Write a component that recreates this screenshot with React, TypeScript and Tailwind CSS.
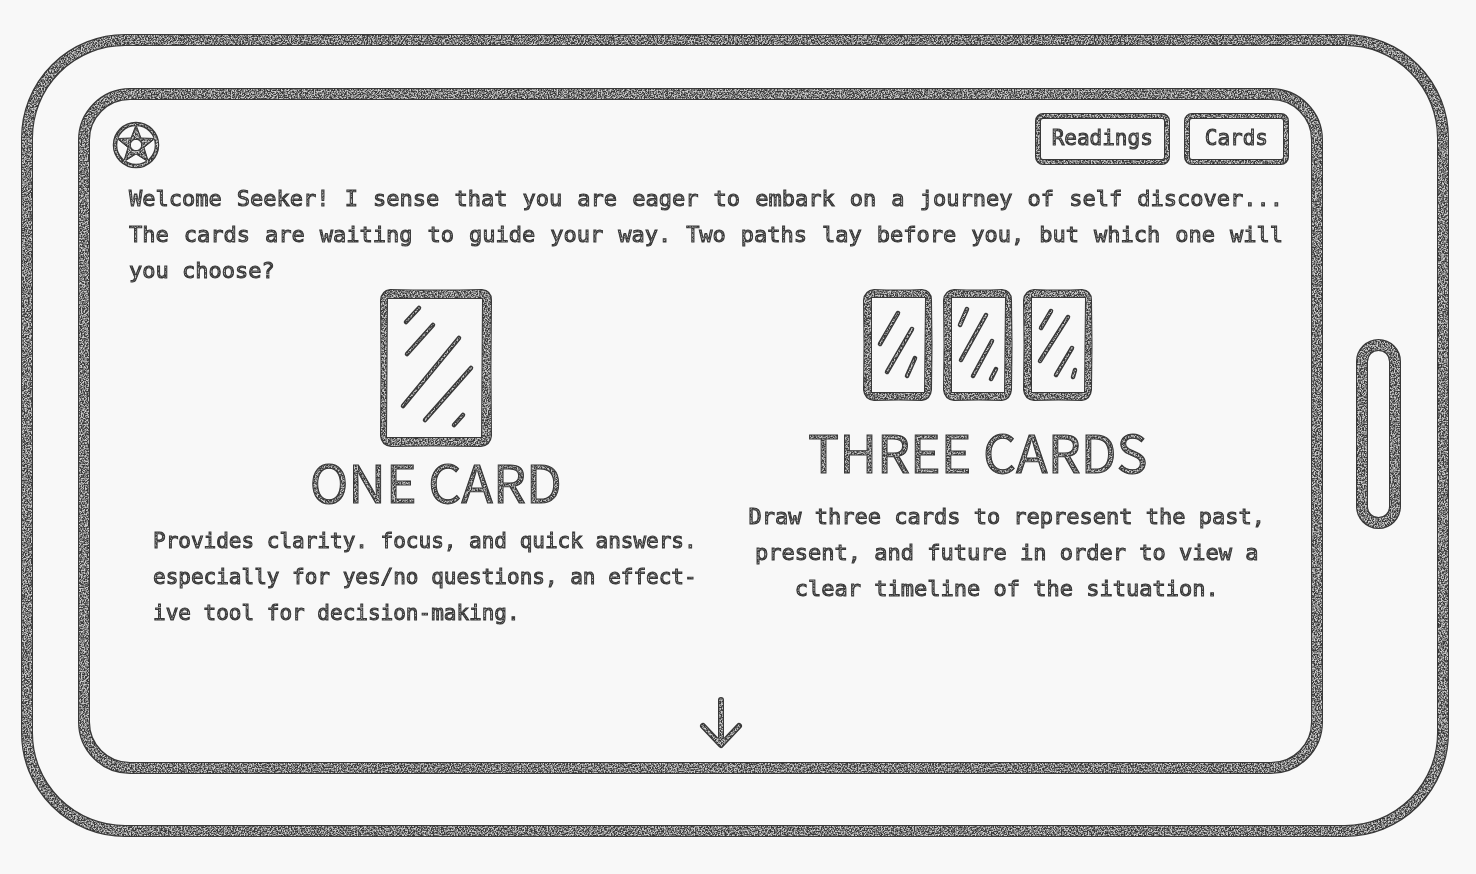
import React from "react";

function PencilFilter() {
  return (
    <svg width="0" height="0" className="absolute" aria-hidden="true">
      <filter id="pencil" x="0" y="0" width="100%" height="100%" colorInterpolationFilters="sRGB">
        <feMorphology in="SourceGraphic" operator="erode" radius="1" result="core" />
        <feTurbulence type="fractalNoise" baseFrequency="0.7" numOctaves="2" seed="9" result="noise" />
        <feColorMatrix
          in="noise"
          type="matrix"
          values="0 0 0 0 0.8  0 0 0 0 0.8  0 0 0 0 0.8  3.4 0 0 0 -1.25"
          result="specks"
        />
        <feComposite in="specks" in2="core" operator="in" result="grain" />
        <feMerge>
          <feMergeNode in="SourceGraphic" />
          <feMergeNode in="grain" />
        </feMerge>
      </filter>
    </svg>
  );
}

function Pentacle() {
  return (
    <svg viewBox="0 0 48 48" className="size-12" fill="none" stroke="currentColor" aria-hidden="true">
      <circle cx="24" cy="24" r="21" strokeWidth="4.5" />
      <path
        d="M24 4 L29 17 L43 17.5 L32 26.5 L36.5 41 L24 33 L11.5 41 L16 26.5 L5 17.5 L19 17 Z M24 18.4 a5.6 5.6 0 1 0 0.01 0 Z"
        fill="currentColor"
        fillRule="evenodd"
        strokeWidth="1"
        strokeLinejoin="round"
      />
    </svg>
  );
}

type CardProps = { strokes: string; large?: boolean };

function CardArt({ strokes, large = false }: CardProps) {
  return (
    <svg
      viewBox={large ? "0 0 112 158" : "0 0 70 112"}
      className={large ? "h-[158px] w-28" : "h-28 w-[70px]"}
      fill="none"
      stroke="currentColor"
      strokeLinecap="round"
      aria-hidden="true"
    >
      {large ? (
        <path
          fillRule="evenodd"
          fill="currentColor"
          stroke="none"
          d="M10 0 Q56 1 102 0 Q112 1 112 11 Q111 80 112 147 Q111 157 101 158 Q50 157 11 158 Q1 157 0 147 Q1 80 0 11 Q1 1 10 0 Z M8 10 L7 148 H101 L102 10 Z"
        />
      ) : (
        <path
          fillRule="evenodd"
          fill="currentColor"
          stroke="none"
          d="M11 0 Q36 1 59 0 Q69 1 69 11 Q70 56 69 101 Q68 111 59 112 Q36 111 11 112 Q1 111 0 101 Q1 56 0 11 Q1 1 11 0 Z M9 9 V103 H61 L62 9 Z"
        />
      )}
      <path d={strokes} strokeWidth="4.5" />
    </svg>
  );
}

function NavButton({ children }: { children: React.ReactNode }) {
  return (
    <button type="button" className="h-[52px] rounded-lg border-[6px] border-current px-[11px] pb-0.5 text-[21px] leading-6">
      {children}
    </button>
  );
}

const threeCards = [
  "M35 24 L17 55 M49 40 L24 83 M52 69 L44 87",
  "M24 20 L17 36 M43 26 L18 71 M49 52 L30 87 M53 80 L48 90",
  "M28 22 L18 39 M45 28 L17 72 M49 59 L33 86 M52 81 L50 88",
];

const headingClass =
  "font-['Noto_Sans_CJK_JP','Noto_Sans',sans-serif] text-[52px] leading-[60px] whitespace-nowrap";

export default function App() {
  return (
    <div className="flex min-h-screen bg-[#f8f8f8] font-['DejaVu_Sans_Mono',monospace] text-[#383838] [-webkit-text-stroke:1px_currentColor]">
      <PencilFilter />
      <div className="flex grow pt-[34px] pr-[27px] pb-[37px] pl-[21px] [filter:url(#pencil)]">
        <div className="flex grow items-stretch rounded-[104px] border-[12px] border-current pt-[42px] pr-9 pb-[51px] pl-[45px]">
          <main className="flex grow flex-col rounded-[52px] border-[12px] border-current pt-[13px] pb-3">
            <header className="flex items-start justify-between pr-[22px] pl-[22px]">
              <a href="#home" aria-label="Home" className="mt-2">
                <Pentacle />
              </a>
              <nav className="flex gap-[14px]">
                <NavButton>Readings</NavButton>
                <NavButton>
                  <span className="px-1">Cards</span>
                </NavButton>
              </nav>
            </header>

            <p className="mt-3 px-[39px] pr-7 text-justify text-[22px] leading-9">
              Welcome Seeker! I sense that you are eager to embark on a journey of self discover... The cards are
              waiting to guide your way. Two paths lay before you, but which one will you choose?
            </p>

            <div className="grid grid-cols-2 pr-7 pl-10">
              <section className="pl-[23px]">
                <div className="flex flex-col items-center pr-4 pl-7">
                  <CardArt
                    large
                    strokes="M39 19 L26 33 M53 36 L27 65 M79 49 L23 117 M91 79 L45 131 M83 126 L74 136"
                  />
                  <h2 className={headingClass + " mt-1"}>ONE CARD</h2>
                </div>
                <p className="mt-3 text-[21px] leading-9 whitespace-nowrap">
                  Provides clarity. focus, and quick answers.
                  <br />
                  especially for yes/no questions, an effect-
                  <br />
                  ive tool for decision-making.
                </p>
              </section>

              <section>
                <div className="flex flex-col items-center pr-[34px]">
                  <div className="flex gap-[10px]">
                    {threeCards.map((strokes) => (
                      <CardArt key={strokes} strokes={strokes} />
                    ))}
                  </div>
                  <h2 className={headingClass + " mt-5"}>THREE CARDS</h2>
                </div>
                <p className="mt-[18px] pl-6 text-center text-[22px] leading-9">
                  Draw three cards to represent the past, present, and future in order to view a clear timeline of the
                  situation.
                </p>
              </section>
            </div>

            <div className="mt-auto flex justify-center pl-10">
              <button type="button" aria-label="Scroll down">
                <svg
                  viewBox="0 0 44 54"
                  className="h-[54px] w-11"
                  fill="none"
                  stroke="currentColor"
                  strokeWidth="6"
                  strokeLinecap="round"
                  strokeLinejoin="round"
                  aria-hidden="true"
                >
                  <path d="M22 4 V48 M4 30 L22 49 L40 30" />
                </svg>
              </button>
            </div>
          </main>
          <button
            type="button"
            aria-label="Device home"
            className="mt-1.5 ml-[33px] h-[190px] w-[45px] shrink-0 self-center rounded-full border-[12px] border-current"
          />
        </div>
      </div>
    </div>
  );
}
